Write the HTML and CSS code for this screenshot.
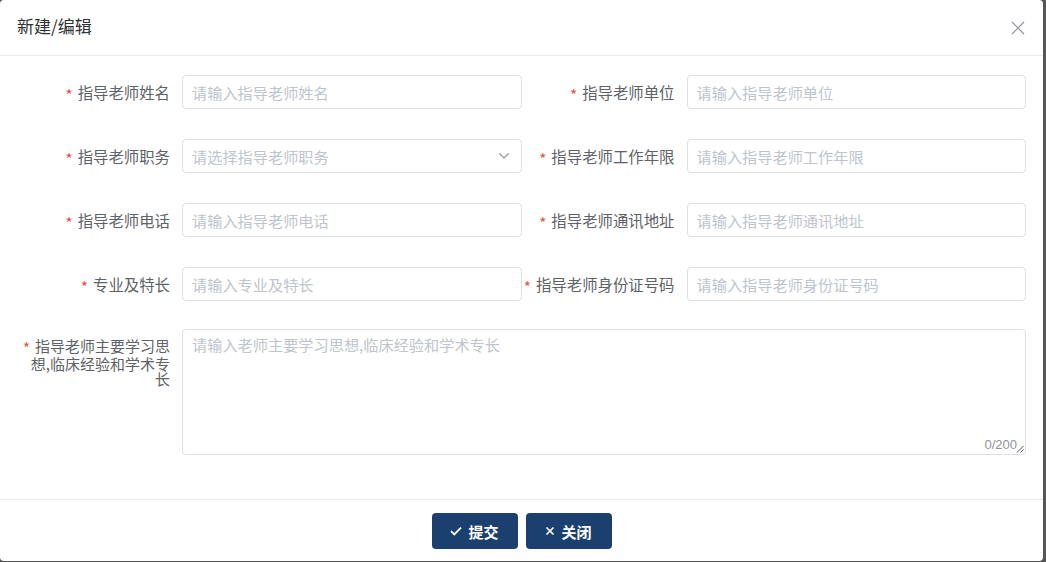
FILE: index.html
```html
<!DOCTYPE html>
<html lang="zh-CN">
<head>
<meta charset="utf-8">
<title>新建/编辑</title>
<link rel="stylesheet" href="styles.css">
</head>
<body>
<div class="dialog">
  <div class="dialog-header">
    <span class="dialog-title">新建/编辑</span>
    <svg class="close-icon" width="14" height="14" viewBox="0 0 14 14"><path d="M1 1 L13 13 M13 1 L1 13" stroke="#909399" stroke-width="1.2" fill="none"/></svg>
  </div>
  <div class="dialog-body">
    <div class="form">
      <div class="form-item">
        <label class="form-label"><span class="req">*</span>指导老师姓名</label>
        <div class="input"><span class="ph">请输入指导老师姓名</span></div>
      </div>
      <div class="form-item">
        <label class="form-label"><span class="req">*</span>指导老师单位</label>
        <div class="input"><span class="ph">请输入指导老师单位</span></div>
      </div>
      <div class="form-item">
        <label class="form-label"><span class="req">*</span>指导老师职务</label>
        <div class="input select"><span class="ph">请选择指导老师职务</span>
          <svg class="arrow" width="12" height="8" viewBox="0 0 12 8"><path d="M1.5 1.5 L6 6 L10.5 1.5" stroke="#909399" stroke-width="1.2" fill="none"/></svg>
        </div>
      </div>
      <div class="form-item">
        <label class="form-label"><span class="req">*</span>指导老师工作年限</label>
        <div class="input"><span class="ph">请输入指导老师工作年限</span></div>
      </div>
      <div class="form-item">
        <label class="form-label"><span class="req">*</span>指导老师电话</label>
        <div class="input"><span class="ph">请输入指导老师电话</span></div>
      </div>
      <div class="form-item">
        <label class="form-label"><span class="req">*</span>指导老师通讯地址</label>
        <div class="input"><span class="ph">请输入指导老师通讯地址</span></div>
      </div>
      <div class="form-item">
        <label class="form-label"><span class="req">*</span>专业及特长</label>
        <div class="input"><span class="ph">请输入专业及特长</span></div>
      </div>
      <div class="form-item">
        <label class="form-label"><span class="req">*</span>指导老师身份证号码</label>
        <div class="input"><span class="ph">请输入指导老师身份证号码</span></div>
      </div>
      <div class="form-item wide">
        <label class="form-label multi"><span class="req">*</span>指导老师主要学习思想,临床经验和学术专长</label>
        <div class="textarea">
          <span class="ph">请输入老师主要学习思想,临床经验和学术专长</span>
          <span class="counter">0/200</span>
          <svg class="resize" width="8" height="8" viewBox="0 0 8 8"><path d="M7.5 1 L1 7.5 M7.5 4.5 L4.5 7.5" stroke="#555" stroke-width="1" fill="none"/></svg>
        </div>
      </div>
    </div>
  </div>
  <div class="dialog-footer">
    <button class="btn">
      <svg width="12" height="10" viewBox="0 0 12 10"><path d="M1 5.2 L4.3 8.4 L11 1.6" stroke="#fff" stroke-width="1.8" fill="none"/></svg>
      <span>提交</span>
    </button>
    <button class="btn">
      <svg width="10" height="10" viewBox="0 0 10 10"><path d="M1.5 1.5 L8.5 8.5 M8.5 1.5 L1.5 8.5" stroke="#fff" stroke-width="1.7" fill="none"/></svg>
      <span>关闭</span>
    </button>
  </div>
</div>
</body>
</html>
```

FILE: styles.css
```css
* {
  box-sizing: border-box;
}

html, body {
  margin: 0;
  padding: 0;
}

body {
  background: #555555;
  font-family: "Noto Sans CJK SC", "Noto Sans", "Liberation Sans", sans-serif;
  width: 1046px;
  height: 562px;
  overflow: hidden;
}

.dialog {
  width: 1043px;
  height: 561px;
  background: #ffffff;
  border-radius: 4px;
  display: flex;
  flex-direction: column;
}

.dialog-header {
  height: 56px;
  flex: none;
  border-bottom: 1px solid #e8eaef;
  display: flex;
  align-items: center;
  justify-content: space-between;
  padding: 0 18px 0 17px;
}

.dialog-title {
  font-size: 17px;
  color: #303133;
  line-height: 24px;
  margin-top: -4px;
}

.close-icon {
  display: block;
}

.dialog-body {
  flex: 1;
  padding: 19px 17px 0 17px;
}

.form {
  display: grid;
  grid-template-columns: 1fr 1fr;
  row-gap: 30px;
}

.form-item {
  display: flex;
  height: 34px;
}

.form-item.wide {
  grid-column: 1 / span 2;
  height: 126px;
  margin-top: -2px;
}

.form-label {
  width: 165px;
  flex: none;
  padding-right: 12px;
  text-align: right;
  font-size: 15.4px;
  line-height: 34px;
  color: #606266;
  white-space: nowrap;
}

.form-label.multi {
  white-space: normal;
  line-height: 15.5px;
  padding-top: 9px;
  font-size: 15px;
}

.req {
  color: #e4543f;
  margin-right: 5px;
  vertical-align: -2px;
}

.input {
  flex: 1;
  height: 34px;
  border: 1px solid #dcdfe6;
  border-radius: 4px;
  padding: 0 9px;
  display: flex;
  align-items: center;
  font-size: 15px;
}

.ph {
  color: #c0c4cc;
  font-size: 15.2px;
}

.select {
  justify-content: space-between;
  padding-right: 11px;
}

.arrow {
  display: block;
}

.textarea {
  flex: 1;
  height: 126px;
  border: 1px solid #dcdfe6;
  border-radius: 4px;
  padding: 3px 9px;
  line-height: 22px;
  position: relative;
}

.counter {
  position: absolute;
  right: 8px;
  bottom: 1px;
  font-size: 13px;
  line-height: 16px;
  color: #909399;
  font-family: "Liberation Sans", "Noto Sans", sans-serif;
}

.resize {
  position: absolute;
  right: 1px;
  bottom: 1px;
  display: block;
}

.dialog-footer {
  flex: none;
  height: 62px;
  border-top: 1px solid #e8eaef;
  padding-top: 13px;
  display: flex;
  justify-content: center;
  align-items: flex-start;
  gap: 8px;
}

.btn {
  width: 86px;
  height: 36px;
  background: #1b3f6e;
  border: none;
  border-radius: 4px;
  color: #ffffff;
  font-family: "Noto Sans CJK SC", "Noto Sans", sans-serif;
  font-size: 15px;
  font-weight: 700;
  display: flex;
  align-items: center;
  justify-content: center;
  gap: 6px;
  padding: 0;
}

.btn svg {
  display: block;
}
```
